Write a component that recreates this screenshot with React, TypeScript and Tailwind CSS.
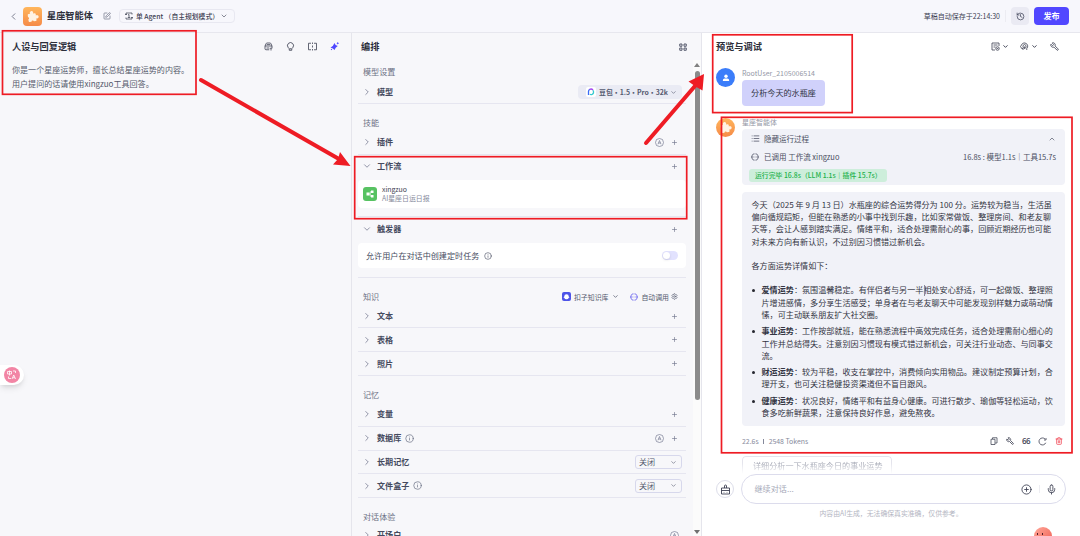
import type { ReactNode } from "react";
import {
  ChevronDown,
  ChevronLeft,
  ChevronRight,
  ChevronUp,
  CirclePlus,
  Copy,
  History,
  Info,
  List,
  Mic,
  Plus,
  Settings,
  SquarePen,
  Trash2,
  Wrench,
} from "lucide-react";

const answerLines = [
  "今天（2025 年 9 月 13 日）水瓶座的综合运势得分为 100 分。运势较为稳当，生活虽",
  "偏向循规蹈矩，但能在熟悉的小事中找到乐趣，比如家常做饭、整理房间、和老友聊",
  "天等，会让人感到踏实满足。情绪平和，适合处理需耐心的事，回顾近期经历也可能",
  "对未来方向有新认识，不过别因习惯错过新机会。",
];

const fortunes = [
  {
    title: "爱情运势",
    lines: [
      "：氛围温馨稳定。有伴侣者与另一半相处安心舒适，可一起做饭、整理照",
      "片增进感情，多分享生活感受；单身者在与老友聊天中可能发现别样魅力或萌动情",
      "愫，可主动联系朋友扩大社交圈。",
    ],
  },
  {
    title: "事业运势",
    lines: [
      "：工作按部就班，能在熟悉流程中高效完成任务，适合处理需耐心细心的",
      "工作并总结得失。注意别因习惯现有模式错过新机会，可关注行业动态、与同事交",
      "流。",
    ],
  },
  {
    title: "财运运势",
    lines: [
      "：较为平稳，收支在掌控中，消费倾向实用物品。建议制定预算计划，合",
      "理开支，也可关注稳健投资渠道但不盲目跟风。",
    ],
  },
  {
    title: "健康运势",
    lines: [
      "：状况良好，情绪平和有益身心健康。可进行散步、瑜伽等轻松运动，饮",
      "食多吃新鲜蔬果，注意保持良好作息，避免熬夜。",
    ],
  },
];

function Puzzle() {
  return (
    <svg className="h-[13px] w-[13px]" viewBox="0 0 26 26" fill="#fff3e4">
      <path
        transform="rotate(-8 13 13)"
        d="M4 9q0-2 2-2h3.200a3.300 3.300 0 1 1 5.600 0H18q2 0 2 2v3a3.300 3.300 0 1 1 0 5.600V21q0 2-2 2h-3.500a2.600 2.600 0 0 0-5 0H6q-2 0-2-2v-3.500a2.700 2.700 0 0 0 0-5z"
      />
    </svg>
  );
}

function AgentIcon() {
  return (
    <svg className="h-2 w-2 shrink-0" viewBox="0 0 16 16" fill="none" stroke="currentColor" strokeWidth="1.5">
      <path d="M2 5V2h12v3M2 11v3h12v-3M0 5h4M12 11h4M6 6l2-1v6M5.500 11h5" />
    </svg>
  );
}

function AutoBadge() {
  return (
    <svg className="h-[9px] w-[9px]" viewBox="0 0 18 18" fill="none" stroke="currentColor" strokeWidth="1.3">
      <circle cx="9" cy="9" r="8" />
      <path d="m6 12.5 3-7.5 3 7.5M7 10h4" />
    </svg>
  );
}

function RunIcon({ className }: { className: string }) {
  return (
    <svg className={className} viewBox="0 0 18 18" fill="none" stroke="currentColor" strokeWidth="1.8">
      <path d="M8 2H6.500A5 5 0 0 0 2.500 6v6a5 5 0 0 0 4 4H8M10 2h1.500a5 5 0 0 1 4 4v6a5 5 0 0 1-4 4H10M.800 7.500v3M17.200 7.500v3M6.500 8v2M11.500 8v2" />
    </svg>
  );
}

function SectionLabel({ children, right }: { children: ReactNode; right?: ReactNode }) {
  return (
    <div className="flex h-[27px] shrink-0 items-center justify-between pt-[11px] pr-[8px] pl-[5px] text-[8.1px] text-[#6b7084]">
      <span>{children}</span>
      {right}
    </div>
  );
}

type RowProps = {
  label: string;
  open?: boolean;
  info?: boolean;
  auto?: boolean;
  select?: boolean;
  bordered?: boolean;
};

function Row({ label, open, info, auto, select, bordered = true }: RowProps) {
  const Chevron = open ? ChevronDown : ChevronRight;

  return (
    <div
      className={
        bordered
          ? "flex h-[23.8px] shrink-0 items-center border-b border-[#e6e6f0] pl-1"
          : "flex h-[23.8px] shrink-0 items-center pl-1"
      }
    >
      <Chevron className="h-[10px] w-[10px] text-[#6f748c]" strokeWidth={1.8} />
      <span className="ml-[5px] text-[8.1px] font-bold text-[#454a5e]">{label}</span>
      {info ? <Info className="ml-1 h-[9px] w-[9px] text-[#666b80]" strokeWidth={1.8} /> : null}
      <div className="ml-auto flex items-center text-[#6f748c]">
        {select ? (
          <div className="mr-1 flex h-[14px] w-[47px] items-center justify-between rounded-[3px] border border-[#d7d8ec] px-[3px] text-[8.1px] text-[#555a6e]">
            关闭
            <ChevronDown className="mr-[1px] h-[7px] w-[7px]" />
          </div>
        ) : (
          <div className="mr-2 flex items-center gap-[7px]">
            {auto ? <AutoBadge /> : null}
            <Plus className="h-[7px] w-[7px]" strokeWidth={2.2} />
          </div>
        )}
      </div>
    </div>
  );
}

function Header() {
  return (
    <header className="flex h-[33px] shrink-0 items-center border-b border-[#e7e7ee] bg-[#f7f7fc] pl-2">
      <ChevronLeft className="h-[11px] w-[11px] text-[#62667a]" strokeWidth={1.8} />
      <div className="ml-1 flex h-[19px] w-[19px] items-center justify-center rounded-[4px] bg-gradient-to-b from-[#ffb65c] to-[#f58a48]">
        <Puzzle />
      </div>
      <span className="ml-[5px] text-[9.2px] font-bold text-[#2c2e3a]">星座智能体</span>
      <SquarePen className="ml-[10px] h-2 w-2 text-[#686c80]" strokeWidth={2} />
      <div className="ml-2 flex h-[14px] w-[116px] items-center rounded-[4px] border border-[#e8e8f1] pl-[5px] text-[6.8px] font-medium text-[#3c4052]">
        <AgentIcon />
        <span className="ml-[3px] whitespace-nowrap">单 Agent （自主规划模式）</span>
        <ChevronDown className="ml-[1px] h-2 w-2 shrink-0" strokeWidth={1.8} />
      </div>
      <div className="mr-[11px] ml-auto flex items-center">
        <span className="text-[7px] text-[#3c4052]">草稿自动保存于22:14:30</span>
        <div className="ml-[5px] h-3 w-px bg-[#ececf2]" />
        <div className="ml-[5px] flex h-[18px] w-[18px] items-center justify-center rounded-[4px] bg-[#eaeaf3]">
          <History className="h-[9px] w-[9px] text-[#41465a]" strokeWidth={2} />
        </div>
        <button className="ml-[5px] h-[18px] w-[35px] rounded-[4px] bg-[#5147ff] text-[8.1px] font-bold text-white">发布</button>
      </div>
    </header>
  );
}

function PersonaPanel() {
  return (
    <section className="w-[352px] shrink-0 border-r border-[#e5e5ec] bg-[#f7f7fa]">
      <div className="flex h-[27px] items-center pr-3 pl-3">
        <h2 className="text-[9.2px] font-bold text-[#2c2e3a]">人设与回复逻辑</h2>
        <div className="ml-auto flex items-center gap-[13px] text-[#3c4052]">
          <svg className="h-[9px] w-[9px]" viewBox="0 0 18 18" fill="none" stroke="currentColor" strokeWidth="1.6" strokeLinejoin="round">
            <path d="M2 8 4 3.500q.5-1.500 2-1.500h6q1.500 0 2 1.500L16 8v4M2 8v5.500q0 2 2 2h6.500M2 8h14M5.500 5.200h7M5 12h5.500M14 17v-5M12 13.500l2-2 2 2" />
          </svg>
          <svg className="h-[9px] w-[9px]" viewBox="0 0 18 18" fill="none" stroke="currentColor" strokeWidth="1.7" strokeLinejoin="round">
            <path d="M6.500 16.500v-3L4 10.500a6 6 0 1 1 10 0l-2.500 3v3zM7.500 13.500h3" />
          </svg>
          <svg className="h-[9px] w-[9px]" viewBox="0 0 18 18" fill="none" stroke="currentColor" strokeWidth="1.6">
            <path d="M6 2.500H1v13h5M12 2.500h5v13h-5M9 1v3M9 7v4M9 14v3" />
          </svg>
          <svg className="h-[9px] w-[9px]" viewBox="0 0 18 18" fill="#4d46ff">
            <path d="M9 2q1 5 6.500 6Q10.500 10.500 9 16 6.500 12 1 11 7 8 9 2ZM15.500 0l1 1.500L18 2.500 16.500 3.500 15.500 5l-1-1.500L13 2.500 14.500 1.500zM3 13.500l1.500 1.500L3 16.500l-1.500-1.500z" />
          </svg>
        </div>
      </div>
      <p className="mt-[3px] pl-3 text-[8.05px] leading-[14px] whitespace-nowrap text-[#555a6b]">
        你是一个星座运势师，擅长总结星座运势的内容。
        <br />
        用户提问的话请使用xingzuo工具回答。
      </p>
    </section>
  );
}

function ArrangePanel() {
  return (
    <section className="flex w-[350px] shrink-0 flex-col border-r border-[#e5e5ec] bg-[#f7f7fa]">
      <div className="flex h-[27px] shrink-0 items-center justify-between pr-[14px] pl-[9px]">
        <h2 className="text-[9.2px] font-bold text-[#2c2e3a]">编排</h2>
        <svg className="h-2 w-2" viewBox="0 0 16 16" fill="none" stroke="#454a5e" strokeWidth="1.8">
          <path d="M1.500 2h4.500v4.500H1.500zM10 2h4.500v4.500H10zM1.500 10h4.500v4.500H1.500zM10 10h4.500v4.500H10z" />
        </svg>
      </div>
      <div className="flex min-h-0 flex-1">
        <div className="flex min-w-0 flex-1 flex-col overflow-hidden pr-[7px] pl-[6px]">
          <div className="-mt-[7px] shrink-0">
            <SectionLabel>模型设置</SectionLabel>
          </div>
          <div className="flex h-[23.800px] shrink-0 items-center border-b border-[#e6e6f0] pt-[2px] pr-1 pl-1">
            <ChevronRight className="h-[10px] w-[10px] text-[#6f748c]" strokeWidth={1.8} />
            <span className="ml-[5px] text-[8.1px] font-bold text-[#454a5e]">模型</span>
            <div className="ml-auto flex h-[14px] w-[104px] items-center rounded-[4px] bg-[#eaebf4] pl-2 text-[6.9px] font-bold whitespace-nowrap text-[#555a70]">
              <span className="flex h-[10px] w-[10px] shrink-0 items-center justify-center rounded-[2px] bg-white">
                <svg className="h-2 w-2" viewBox="0 0 16 16" fill="none" strokeWidth="2.6">
                  <path d="M3 14V7a5 5 0 0 1 3-4.500" stroke="#3b6cf5" />
                  <path d="M5 3q4-2.500 7 1" stroke="#a347f0" />
                  <path d="M12 4.500q3 6-2 8.500-3 1-4-1" stroke="#35c9cf" />
                </svg>
              </span>
              <span className="ml-[3px]">豆包・1.5・Pro・32k</span>
              <ChevronDown className="ml-[2px] h-[7px] w-[7px] shrink-0" />
            </div>
          </div>
          <SectionLabel>技能</SectionLabel>
          <Row label="插件" auto />
          <Row label="工作流" open bordered={false} />
          <div className="mt-[2px] flex h-[28px] shrink-0 items-center rounded-[4px] bg-white pl-[5px]">
            <div className="flex h-[14px] w-[14px] items-center justify-center rounded-[3px] bg-[#57c262]">
              <svg className="h-2 w-2" viewBox="0 0 16 16" fill="#fff">
                <path d="M1 5h6v6H1zM10 1h5v5h-5zM10 10h5v5h-5z" />
                <path d="M6 8h2.500M12 3.500H8.500v9H12" fill="none" stroke="#fff" strokeWidth="1.300" />
              </svg>
            </div>
            <div className="ml-[5px] text-[6.9px] leading-[9px]">
              <div className="text-[#3c4052]">xingzuo</div>
              <div className="text-[#868a9c]">AI星座日运日报</div>
            </div>
          </div>
          <div className="h-[9px] shrink-0 border-b border-[#e6e6f0]" />
          <Row label="触发器" open bordered={false} />
          <div className="mt-[2px] flex h-[25px] shrink-0 items-center rounded-[4px] bg-white pr-2 pl-2 text-[8.1px] text-[#454a5e]">
            允许用户在对话中创建定时任务
            <Info className="ml-[5px] h-2 w-2" strokeWidth={1.8} />
            <div className="ml-auto flex h-[9px] w-4 items-center rounded-full bg-[#e2e2fe] pl-px">
              <div className="h-[7px] w-[7px] rounded-full bg-white shadow-sm" />
            </div>
          </div>
          <div className="h-[9.500px] shrink-0 border-b border-[#e6e6f0]" />
          <SectionLabel
            right={
              <div className="flex items-center text-[6.9px] text-[#555a6e]">
                <svg className="h-[9px] w-[9px]" viewBox="0 0 18 18">
                  <rect width="18" height="18" rx="4" fill="#4d53e8" />
                  <path d="M4.500 9a4.500 4.500 0 0 1 9 0l1.500 2.500h-1.500A4.500 4.500 0 0 1 9 14.500a4.500 4.500 0 0 1-4.500-3H3z" fill="#fff" />
                </svg>
                <span className="ml-[3px]">扣子知识库</span>
                <ChevronDown className="ml-[4px] h-[7px] w-[7px]" strokeWidth={2.500} />
                <span className="ml-[11px] text-[#5a54ee]">
                  <RunIcon className="h-[8px] w-[8px]" />
                </span>
                <span className="ml-[3px]">自动调用</span>
                <Settings className="ml-[2px] h-[7px] w-[7px]" />
              </div>
            }
          >
            知识
          </SectionLabel>
          <Row label="文本" />
          <Row label="表格" />
          <Row label="照片" />
          <SectionLabel>记忆</SectionLabel>
          <Row label="变量" />
          <Row label="数据库" info auto />
          <Row label="长期记忆" select />
          <Row label="文件盒子" info select />
          <SectionLabel>对话体验</SectionLabel>
          <div className="flex h-[20px] shrink-0 items-center pl-1">
            <ChevronRight className="h-[10px] w-[10px] text-[#6f748c]" strokeWidth={1.8} />
            <span className="ml-[5px] text-[8.1px] font-bold text-[#454a5e]">开场白</span>
            <span className="mr-[7px] ml-auto text-[#6f748c]">
              <AutoBadge />
            </span>
          </div>
        </div>
        <div className="flex w-2 shrink-0 flex-col items-center bg-[#fbfbfb] pt-[3px] pb-[2px]">
          <svg className="h-1 w-[6px]" viewBox="0 0 6 4">
            <path d="M3 0 6 4H0z" fill="#808080" />
          </svg>
          <div className="mt-[4px] h-[329px] w-[5px] rounded-full bg-[#8b8b8b]" />
          <svg className="mt-auto h-1 w-[6px]" viewBox="0 0 6 4">
            <path d="M0 0h6L3 4z" fill="#707070" />
          </svg>
        </div>
      </div>
    </section>
  );
}

function ProcessCard() {
  return (
    <div className="h-[56px] w-[323px] rounded-[4px] bg-[#f1f2f8] px-[9px] pt-1 text-[7.500px] text-[#4a4e61]">
      <div className="flex h-[11px] items-center">
        <List className="h-[9px] w-[9px]" strokeWidth={2} />
        <span className="ml-[4px]">隐藏运行过程</span>
        <ChevronUp className="ml-auto h-2 w-2" strokeWidth={2} />
      </div>
      <div className="mt-[7px] flex h-[11px] items-center">
        <RunIcon className="h-2 w-2" />
        <span className="ml-[5px]">已调用 工作流 xingzuo</span>
        <span className="ml-auto">16.8s : 模型1.1s｜工具15.7s</span>
      </div>
      <div className="mt-[7px] -ml-[2px] flex h-[13px] w-[138px] items-center rounded-[3px] bg-[#cdeedb] pl-[6px] text-[6.850px] font-medium whitespace-nowrap text-[#22b14c]">
        运行完毕 16.8s（LLM 1.1s｜插件 15.7s）
      </div>
    </div>
  );
}

function AnswerCard() {
  return (
    <div className="relative mt-[7px] h-[234px] w-[323px] rounded-[4px] bg-[#f1f2f8] pt-[7px] pl-[9.500px] text-[8.1px] leading-[12.200px] whitespace-nowrap text-[#333543]">
      {answerLines.map((line) => (
        <div key={line}>{line}</div>
      ))}
      <div className="mt-[12.200px]">各方面运势详情如下：</div>
      <ul className="mt-[12.200px] space-y-[4.300px]">
        {fortunes.map((item) => (
          <li key={item.title} className="flex">
            <span className="mt-[5px] mr-[7px] h-[3px] w-[3px] shrink-0 rounded-full bg-[#26272f]" />
            <div>
              {item.lines.map((line, i) => (
                <div key={line}>
                  {i === 0 ? <b className="font-bold">{item.title}</b> : null}
                  {line}
                </div>
              ))}
            </div>
          </li>
        ))}
      </ul>
      {/* text cursor */}
      <span className="absolute top-[93px] left-[181.500px] h-[11px] w-px bg-[#8a8c98]" />
    </div>
  );
}

function PreviewPanel() {
  return (
    <section className="flex min-w-0 flex-1 flex-col overflow-hidden bg-white pr-[14px] pl-[14px]">
      <div className="flex h-[27px] shrink-0 items-center">
        <h2 className="text-[9.2px] font-bold text-[#2c2e3a]">预览与调试</h2>
        <div className="mr-[7px] ml-auto flex items-center text-[#3c4052]">
          <svg className="h-[9px] w-[9px]" viewBox="0 0 18 18" fill="none" stroke="currentColor" strokeWidth="1.600">
            <path d="M16 8V2H2v14h6M5 6h8M5 10h4" />
            <circle cx="13" cy="13" r="3.500" />
            <path d="M11.500 13h3" />
          </svg>
          <ChevronDown className="ml-[2px] h-[7px] w-[7px]" strokeWidth={3.200} />
          <svg className="ml-[11px] h-[9px] w-[9px]" viewBox="0 0 18 18" fill="none" stroke="currentColor" strokeWidth="1.600">
            <path d="M6 16v-3H4q-2 0-2-2.500L1 9l2-3c1-3 4-4.500 7-4a6.500 6.500 0 0 1 3.500 11V16M6 7l3-2 3 2v4l-3 2-3-2zM9 9v4" />
          </svg>
          <ChevronDown className="ml-[2px] h-[7px] w-[7px]" strokeWidth={3.200} />
          <Wrench className="ml-[12px] h-[9px] w-[9px] -scale-x-100" strokeWidth={2.200} />
        </div>
      </div>

      <div className="mt-2 flex shrink-0">
        <div className="flex h-[19px] w-[19px] items-center justify-center rounded-full bg-[#3b7dfa]">
          <svg className="h-[8px] w-[8px]" viewBox="0 0 18 18" fill="#fff">
            <circle cx="9" cy="5" r="3.800" />
            <path d="M2 16v-2q0-4 4-4h6q4 0 4 4v2z" />
          </svg>
        </div>
        <div className="ml-[7px]">
          <div className="h-3 pt-px text-[7px] leading-[9px] text-[#9497a6]">RootUser_2105006514</div>
          <div className="flex h-[26px] w-[83px] items-center justify-center rounded-[4px] bg-[#d0d1fb] text-[8.1px] text-[#2f3142]">
            分析今天的水瓶座
          </div>
        </div>
      </div>

      <div className="mt-[12px] flex shrink-0">
        <div className="flex h-[19px] w-[19px] shrink-0 items-center justify-center rounded-full bg-gradient-to-b from-[#ffb65c] to-[#f58a48]">
          <Puzzle />
        </div>
        <div className="ml-[7px]">
          <div className="h-[11px] text-[7px] leading-[9px] text-[#9497a6]">星座智能体</div>
          <ProcessCard />
          <AnswerCard />
          <div className="flex h-[30px] items-center text-[6.900px] text-[#85899b]">
            <span>22.6s</span>
            <span className="mx-[4.500px] h-[5px] w-px bg-[#85899b]" />
            <span>2548 Tokens</span>
            <div className="mr-[2px] ml-auto flex items-center gap-2 text-[#3c4052]">
              <svg className="h-2 w-2" viewBox="0 0 16 16" fill="none" stroke="currentColor" strokeWidth="1.500" strokeLinejoin="round">
                <path d="M2 4.500h8V15H2zM5 4V1.500h9V12h-3.500" />
              </svg>
              <Wrench className="h-2 w-2 -scale-x-100" strokeWidth={2.400} />
              <span className="w-2 text-[8px] font-medium tracking-[-0.5px]">66</span>
              <svg className="h-[9px] w-[9px]" viewBox="0 0 18 18" fill="none" stroke="currentColor" strokeWidth="1.600">
                <path d="M15.500 11.500A7 7 0 1 1 14 4M16 2v4h-4" />
              </svg>
              <Trash2 className="h-2 w-2 text-[#f04452]" strokeWidth={2.300} />
            </div>
          </div>
          <div className="h-[18px] w-[150px] rounded-t-[4px] border border-b-0 border-[#e4e4ec] mask-b-from-40% mask-b-to-100% pt-[3px] pl-[10px] text-[8.1px] leading-[12px] whitespace-nowrap text-[#a4a7b4]">
            详细分析一下水瓶座今日的事业运势
          </div>
        </div>
      </div>

      <div className="flex shrink-0 items-center">
        <div className="flex h-[18px] w-[18px] items-center justify-center rounded-full border border-[#dddeea]">
          <svg className="h-[11px] w-[11px] shrink-0" viewBox="0 0 22 22" fill="none" stroke="#3c4052" strokeWidth="1.800">
            <path d="M3 8h16v12H3zM3 13h16M9 8V4a2 2 0 0 1 4 0v4M8 16v1M14 16v1" />
          </svg>
        </div>
        <div className="ml-[7px] flex h-[30px] w-[325px] items-center rounded-full border border-[#dcdcec] pr-[8px] pl-[12.500px] text-[8.1px] text-[#a6a9b8]">
          继续对话...
          <CirclePlus className="ml-auto h-[11px] w-[11px] text-[#3c4052]" strokeWidth={1.900} />
          <div className="mx-[6.500px] h-2 w-px bg-[#ededf2]" />
          <Mic className="h-[11px] w-[11px] text-[#3c4052]" strokeWidth={1.900} />
        </div>
      </div>
      <div className="mt-[4px] h-[11px] shrink-0 text-center text-[6.850px] leading-[11px] text-[#b3b5c2]">
        内容由AI生成，无法确保真实准确，仅供参考。
      </div>
    </section>
  );
}

function FloatingWidgets() {
  return (
    <>
      <div className="absolute top-[365px] left-0 flex h-[20px] w-[24px] items-center justify-end rounded-r-full bg-white pr-[4px] shadow-md">
        <div className="flex h-4 w-4 items-center justify-center rounded-full bg-[#f285a5]">
          <svg className="h-[10px] w-[10px]" viewBox="0 0 20 20" fill="none" stroke="#fff" strokeWidth="1.600">
            <path d="M1 3h8v5H1zM5 1v10M12 2h5v4M3 13v4h5M10 18l3.500-8 3.500 8M11.500 15.500h4" />
          </svg>
        </div>
      </div>
      <div className="absolute top-[527px] left-[1034px] h-[18px] w-[18px] rounded-full bg-gradient-to-br from-[#ffa79a] to-[#ee5a50]">
        <div className="mt-[6px] ml-[3px] flex gap-1">
          <span className="h-[2px] w-px bg-[#51202a]" />
          <span className="h-[2px] w-px bg-[#51202a]" />
        </div>
      </div>
    </>
  );
}

// Red callout frames and arrows drawn over the workspace
function Annotations() {
  return (
    <svg className="pointer-events-none absolute inset-0 h-full w-full" viewBox="0 0 1080 536" fill="none" stroke="#ee1c24">
      <g strokeWidth="1.700">
        <rect x="2.500" y="30.800" width="193.500" height="63.500" />
        <rect x="354.700" y="156.700" width="332" height="62" />
        <rect x="712.700" y="34.800" width="139.500" height="77.800" />
        <rect x="721.500" y="117.300" width="350.500" height="335.500" />
      </g>
      <g strokeWidth="4" strokeLinecap="round">
        <path d="M201 80 339 159" />
        <path d="M646 143 695 86" />
      </g>
      <path d="M350.500 166 333 164.500 338 159 340 152z" fill="#ee1c24" stroke="none" />
      <path d="M704 74 702.500 90.500 695.500 86.500 688.500 81.500z" fill="#ee1c24" stroke="none" />
    </svg>
  );
}

export default function App() {
  return (
    <div className="relative flex h-[536px] w-[1080px] flex-col overflow-hidden bg-white font-['Noto_Sans_CJK_SC',sans-serif] leading-normal">
      <Header />
      <main className="flex min-h-0 flex-1">
        <PersonaPanel />
        <ArrangePanel />
        <PreviewPanel />
      </main>
      <FloatingWidgets />
      <Annotations />
    </div>
  );
}
